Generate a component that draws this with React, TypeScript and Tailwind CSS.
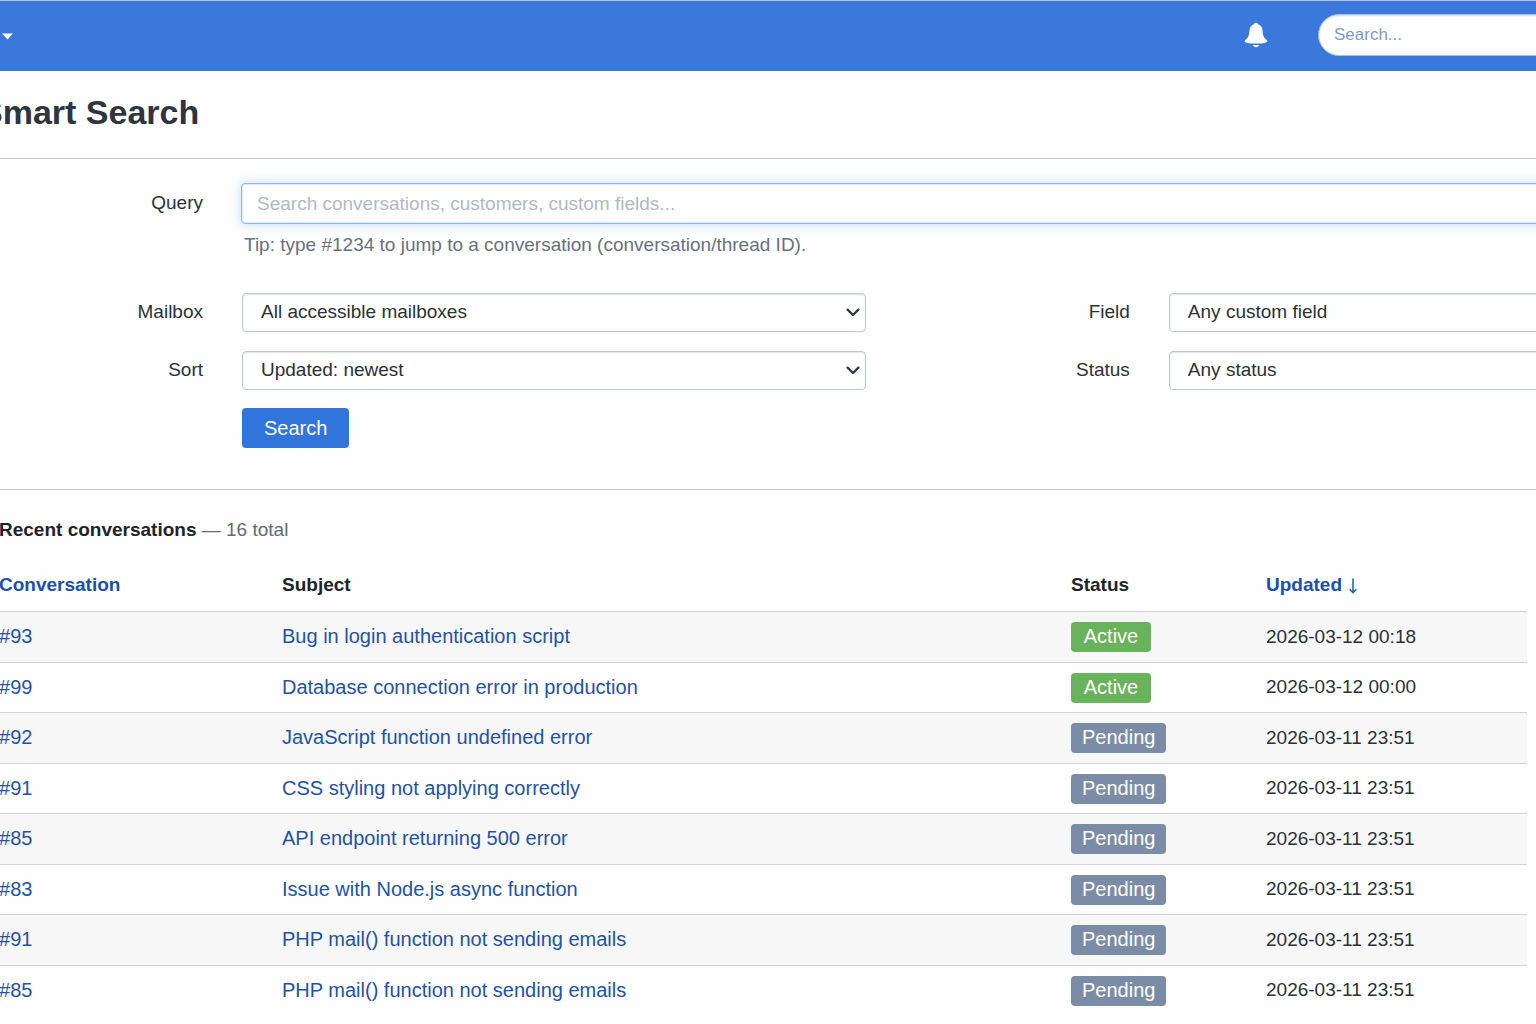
import React, { useState } from 'react';

type Status = 'Active' | 'Pending';

interface Conversation {
  id: number;
  subject: string;
  status: Status;
  updated: string;
}

const conversations: Conversation[] = [
  { id: 93, subject: 'Bug in login authentication script', status: 'Active', updated: '2026-03-12 00:18' },
  { id: 99, subject: 'Database connection error in production', status: 'Active', updated: '2026-03-12 00:00' },
  { id: 92, subject: 'JavaScript function undefined error', status: 'Pending', updated: '2026-03-11 23:51' },
  { id: 91, subject: 'CSS styling not applying correctly', status: 'Pending', updated: '2026-03-11 23:51' },
  { id: 85, subject: 'API endpoint returning 500 error', status: 'Pending', updated: '2026-03-11 23:51' },
  { id: 83, subject: 'Issue with Node.js async function', status: 'Pending', updated: '2026-03-11 23:51' },
  { id: 91, subject: 'PHP mail() function not sending emails', status: 'Pending', updated: '2026-03-11 23:51' },
  { id: 85, subject: 'PHP mail() function not sending emails', status: 'Pending', updated: '2026-03-11 23:51' },
];

const statusColors: Record<Status, string> = {
  Active: 'bg-[#68b35b]',
  Pending: 'bg-[#7b8ca7]',
};

interface SelectFieldProps {
  id: string;
  label: string;
  options: string[];
}

const SelectField: React.FC<SelectFieldProps> = ({ id, label, options }) => (
  <>
    <label htmlFor={id} className="text-right">
      {label}
    </label>
    <div className="relative">
      <select
        id={id}
        className="block h-[39px] w-full appearance-none rounded-sm border border-[#c1c7d0] bg-white pl-[18px] pr-10 shadow-[inset_0_1px_2px_rgba(0,0,0,0.12)] outline-none"
      >
        {options.map((option) => (
          <option key={option}>{option}</option>
        ))}
      </select>
      <svg
        viewBox="0 0 14 9"
        className="pointer-events-none absolute right-1.5 top-[15px] h-[9px] w-3.5"
        fill="none"
        stroke="#343a42"
        strokeWidth="2.3"
        strokeLinecap="round"
        strokeLinejoin="round"
      >
        <path d="M1.6 1.6 7 7l5.4-5.4" />
      </svg>
    </div>
  </>
);

const TopBar = () => (
  <header className="flex h-[71px] items-center justify-between overflow-hidden border-t border-[#b9c3d0] bg-[#3a78dc]">
    <button type="button" aria-label="Open menu" className="pl-0.5">
      <svg viewBox="0 0 11 7" className="h-[7px] w-[11px]" fill="#fff">
        <path d="M0 .4h11L5.5 6.6z" />
      </svg>
    </button>

    <div className="-mr-11 flex items-center gap-[50px] pb-0.5">
      <button type="button" aria-label="Notifications">
        <svg viewBox="0 0 24 26" className="h-[26px] w-6" fill="#fff">
          <path d="M12 .8c1.200 0 2 .6 2.200 1.500 2.700.9 4 3 4.300 6.200.4 4.200.8 6.300 2.700 8.200.9.9 2.300 1.500 2.200 2.600-.1.9-1.200 1.300-2.400 1.600-2.300.5-5.400.7-9 .7s-6.700-.2-9-.7C1.800 20.600.7 20.200.6 19.300c-.1-1.100 1.300-1.700 2.200-2.600 1.900-1.900 2.300-4 2.700-8.200.3-3.200 1.600-5.300 4.300-6.200C10 1.400 10.800.8 12 .8z" />
          <path d="M9.100 23.100h5.800c-.2 1.300-1.300 2.100-2.900 2.100s-2.700-.8-2.900-2.100z" />
        </svg>
      </button>
      <input
        type="search"
        aria-label="Search"
        placeholder="Search..."
        className="h-[42px] w-[262px] rounded-full border border-[#a9bcdb] bg-white px-[15px] text-[17px] shadow-[inset_0_1px_2px_rgba(0,0,0,0.15)] outline-none placeholder:text-[#8398c2]"
      />
    </div>
  </header>
);

const SearchForm = () => {
  const [query, setQuery] = useState('');

  return (
    <form
      onSubmit={(e) => e.preventDefault()}
      className="border-b border-[#c5c9d1] pb-[41px] pt-6"
    >
      {/* The fields are wider than the visible page */}
      <div className="w-[116.5%]">
        <div className="flex gap-[38px]">
          <label htmlFor="query" className="w-[223px] shrink-0 text-right leading-[39px]">
            Query
          </label>
          <div className="flex-1">
            <input
              id="query"
              type="text"
              value={query}
              onChange={(e) => setQuery(e.target.value)}
              placeholder="Search conversations, customers, custom fields..."
              className="block h-[41px] w-full rounded-sm border border-[#8db6f2] bg-white px-[15px] shadow-[inset_0_0_1px_1px_rgba(150,190,245,0.35),0_0_12px_rgba(90,150,235,0.35)] outline-none placeholder:text-[#b3b8c4]"
            />
            <p className="ml-[3px] mt-[9px] leading-6 text-[#69717d]">
              Tip: type #1234 to jump to a conversation (conversation/thread ID).
            </p>
          </div>
        </div>

        <div className="mt-9 grid grid-cols-[223px_1fr_225px_1fr] items-center gap-x-[39px] gap-y-[19px]">
          <SelectField id="mailbox" label="Mailbox" options={['All accessible mailboxes']} />
          <SelectField id="field" label="Field" options={['Any custom field']} />
          <SelectField id="sort" label="Sort" options={['Updated: newest']} />
          <SelectField id="status" label="Status" options={['Any status']} />
        </div>
      </div>

      <button
        type="submit"
        className="ml-[262px] mt-[18px] h-10 rounded-sm bg-[#3174dc] px-[22px] text-xl text-white"
      >
        Search
      </button>
    </form>
  );
};

const ConversationTable = () => (
  <table className="mt-4 w-full table-fixed border-separate border-spacing-0 text-left">
    <thead>
      <tr className="h-[54px] text-[#20242a] [&>th]:border-b [&>th]:border-[#cdd0d5] [&>th]:p-0 [&>th]:pt-0.5">
        <th className="w-[283px]">
          <a href="#conversation" className="text-[#1a50b0]">
            Conversation
          </a>
        </th>
        <th>Subject</th>
        <th className="w-[195px]">Status</th>
        <th className="w-[261px]">
          <a href="#updated" className="flex items-center gap-[7px] text-[#1a50b0]">
            Updated
            <svg
              viewBox="0 0 8 16"
              className="h-4 w-2"
              fill="none"
              stroke="#2a60bd"
              strokeWidth="1.6"
              strokeLinecap="round"
              strokeLinejoin="round"
            >
              <path d="M4 1v13.500M1.200 11.700 4 14.700l2.800-3" />
            </svg>
          </a>
        </th>
      </tr>
    </thead>
    <tbody>
      {conversations.map((conversation, i) => (
        <tr
          key={i}
          className="odd:h-[51px] even:h-[50px] odd:bg-[#f7f7f8] [&>td]:border-b [&>td]:border-[#d0d3d7] [&>td]:p-0 last:[&>td]:border-transparent"
        >
          <td>
            <a href="#conversation" className="text-xl text-[#1f52ab]">
              #{conversation.id}
            </a>
          </td>
          <td>
            <a href="#conversation" className="text-xl text-[#1f52ab]">
              {conversation.subject}
            </a>
          </td>
          <td>
            <span
              className={`inline-block h-[30px] min-w-20 rounded-sm px-[11px] text-center align-middle text-xl leading-7 text-white ${statusColors[conversation.status]}`}
            >
              {conversation.status}
            </span>
          </td>
          <td>{conversation.updated}</td>
        </tr>
      ))}
    </tbody>
  </table>
);

const App = () => (
  <div className="min-h-screen overflow-hidden bg-[#fefefe] font-['Liberation_Sans',Arial,sans-serif] text-[19px] text-[#2c3138]">
    <TopBar />

    {/* Content is scrolled slightly past the left edge */}
    <main className="-ml-5">
      <h1 className="border-b border-[#c5c9d1] pb-[25px] pt-5 text-[34px] font-bold leading-[42px] text-[#2f353f]">
        Smart Search
      </h1>

      <SearchForm />

      <section className="pl-[19px] pr-[9px] pt-7">
        <h2 className="leading-6 text-[#646b76]">
          <strong className="text-[#20242a]">Recent conversations</strong> — 16 total
        </h2>
        <ConversationTable />
      </section>
    </main>
  </div>
);

export default App;
